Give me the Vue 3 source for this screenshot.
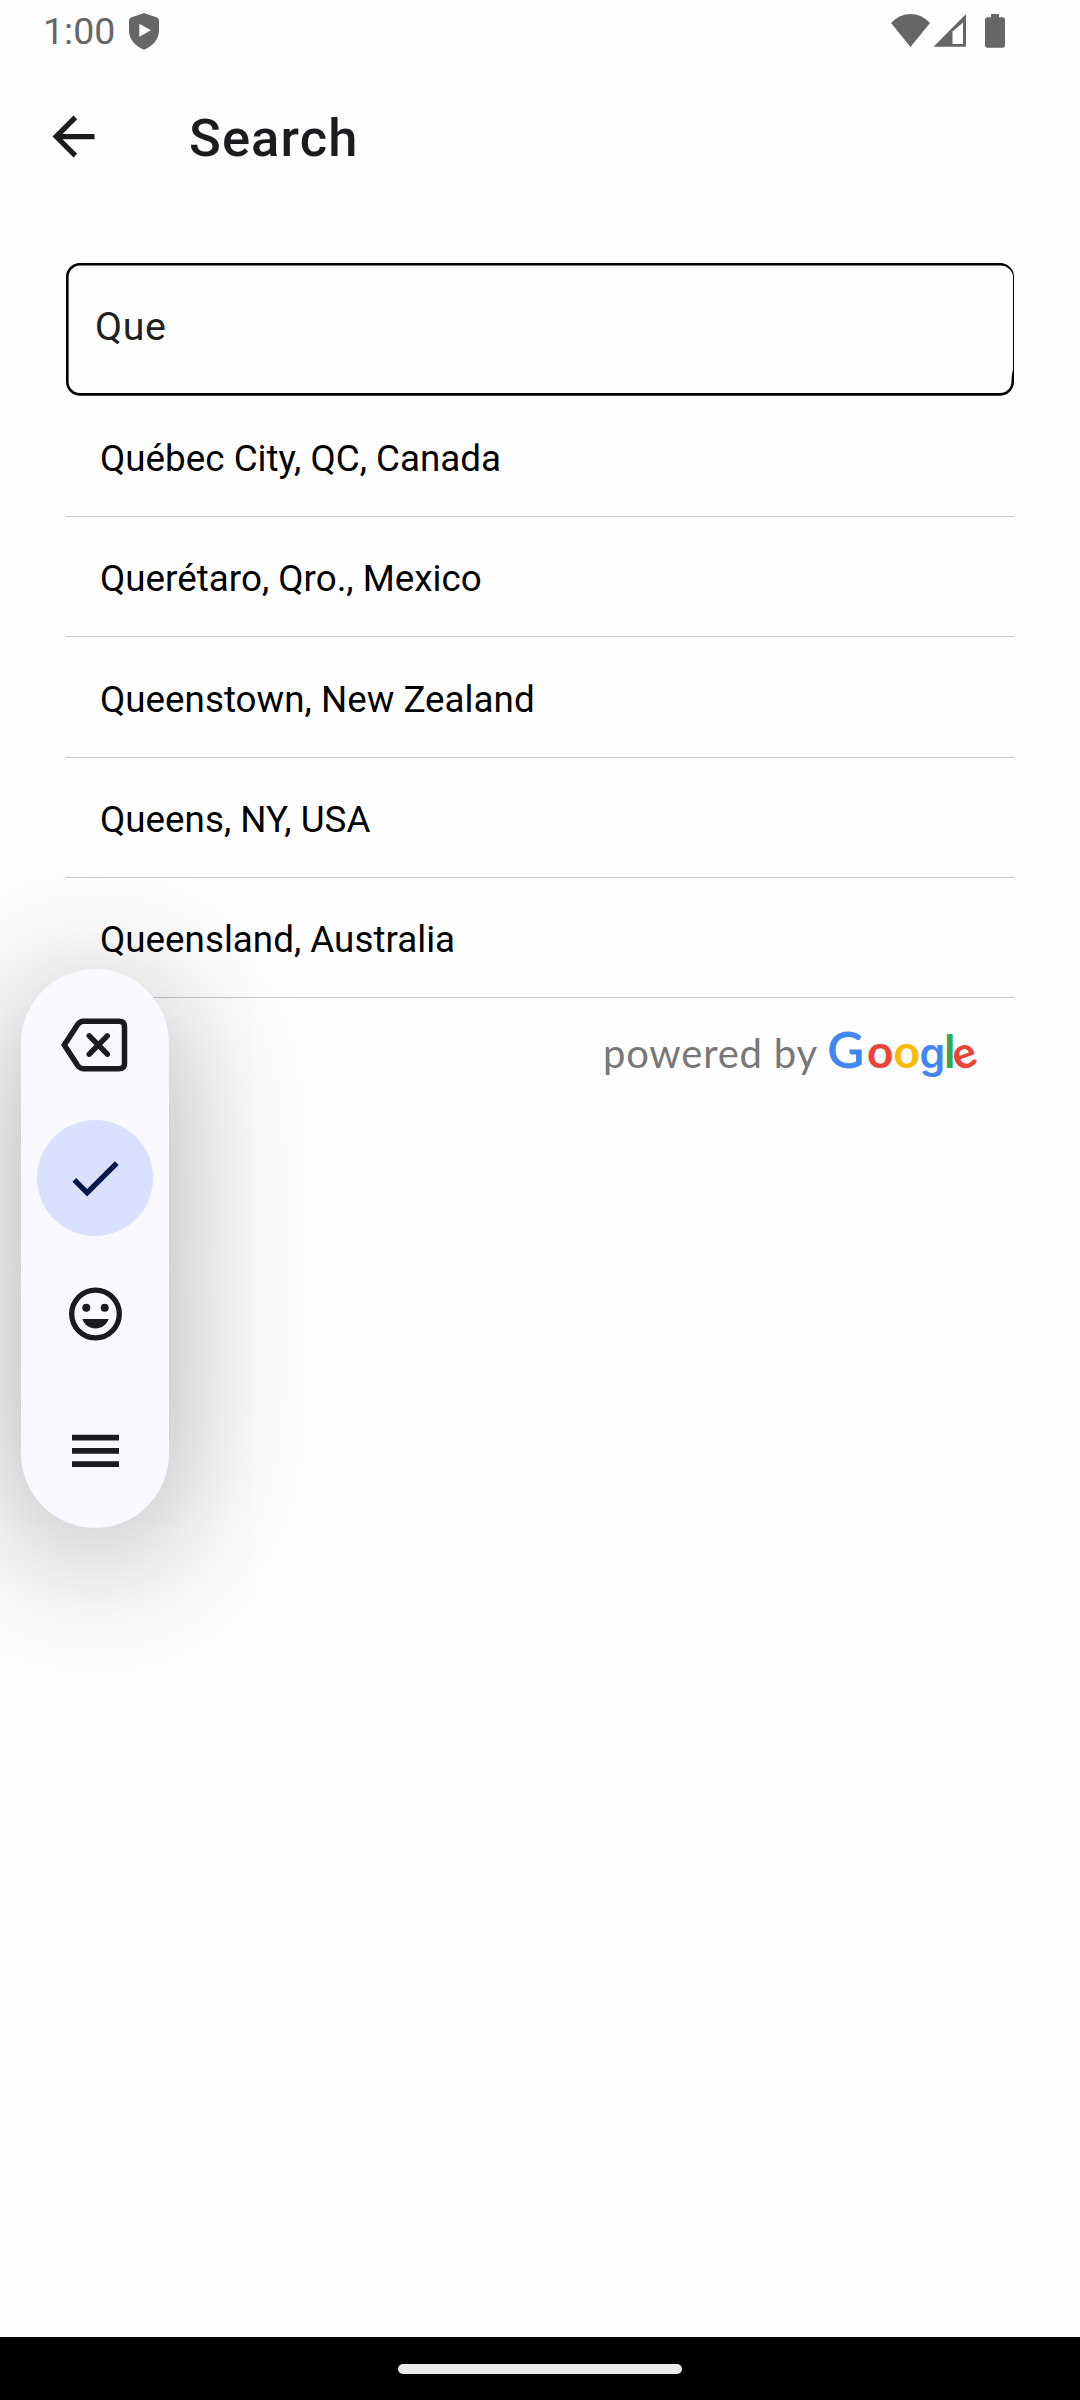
<script setup>
const results = [
  'Québec City, QC, Canada',
  'Querétaro, Qro., Mexico',
  'Queenstown, New Zealand',
  'Queens, NY, USA',
  'Queensland, Australia',
]
</script>

<template>
  <div class="screen">
    <header class="status">
      <span class="time">1:00</span>
      <svg class="shield" width="30" height="37" viewBox="0 0 30 37">
        <path fill="#666" fill-rule="evenodd" d="M15 0 L28 4.600 Q30 5.400 30 7.600 V17.500 C30 26.500 23.500 33.500 15 36.700 C6.500 33.500 0 26.500 0 17.500 V7.600 Q0 5.400 2 4.600 Z M10.300 10.800 V23.800 L22 17.300 Z" />
      </svg>
      <svg class="signals" width="115" height="36" viewBox="0 0 115 36">
        <g fill="#666">
          <path d="M0 10 Q8.500 1 19.500 1 Q30.500 1 39 10 L19.500 34 Z" />
          <path fill-rule="evenodd" d="M42.500 33.800 L75 1 V33.800 Z M61.500 18.500 V31 H72 V9.500 Z" />
          <path d="M100 1 H108 V4.300 H111.500 Q114 4.300 114 6.800 V32 Q114 34.800 111.500 34.800 H96.500 Q94 34.800 94 32 V6.800 Q94 4.300 96.500 4.300 H100 Z" />
        </g>
      </svg>
    </header>

    <div class="appbar">
      <svg class="back" width="63" height="63" viewBox="0 0 24 24">
        <path fill="#1d1b20" d="M20 11H7.830l5.590-5.590L12 4l-8 8 8 8 1.410-1.410L7.830 13H20v-2z" />
      </svg>
      <h1>Search</h1>
    </div>

    <main>
      <div class="field">
        <svg class="outline" width="948" height="133" viewBox="0 0 948 133">
          <path fill-rule="evenodd" d="M14 0 H934 A14 14 0 0 1 948 14 V119 A14 14 0 0 1 934 132.700 H14 A14 14 0 0 1 0 119 V14 A14 14 0 0 1 14 0 Z M14 2.600 A11.400 11.400 0 0 0 2.600 14 V119 A11.400 11.400 0 0 0 14 130.100 H934 A11.500 11.500 0 0 0 945.500 119 Q945.500 111 947 107 V14 A13 11.400 0 0 0 934 2.600 Z" />
        </svg>
        <span>Que</span>
      </div>
      <ul>
        <li v-for="r in results" :key="r">{{ r }}</li>
      </ul>
      <div class="credit">
        <svg width="395" height="80" viewBox="0 -12 395 80">
          <text class="by" x="0" y="45" textLength="214" lengthAdjust="spacing">powered by</text>
          <g class="logo">
            <text class="g-cap" x="224.500" y="45">G</text>
            <text x="264" y="45" fill="#ea4335">o</text>
            <text x="290.500" y="45" fill="#fbbc05">o</text>
            <text class="g-low" x="316.500" y="45">g</text>
            <text x="341" y="45" fill="#34a853">l</text>
            <text class="tilt" x="350" y="45" fill="#ea4335" transform="rotate(-20 362 34)">e</text>
          </g>
        </svg>
      </div>
    </main>

    <aside class="tools">
      <div class="tool">
        <svg width="68" height="54" viewBox="0 0 68 54">
          <g fill="none" stroke="#1b1b1f" stroke-width="5.500" stroke-linejoin="round" stroke-linecap="round">
            <path stroke-linejoin="miter" d="M3.300 27 L16.300 7 Q19 3.300 22 3.300 H58 Q63.500 3.300 63.500 8.500 V45.500 Q63.500 50.700 58 50.700 H22 Q19 50.700 16.300 47 Z" />
            <path d="M28.300 17.800 L46.300 36.200 M46.300 17.800 L28.300 36.200" />
          </g>
        </svg>
      </div>
      <div class="tool ok">
        <svg width="63" height="63" viewBox="0 0 24 24">
          <path fill="#001849" d="M9 16.170L4.830 12l-1.420 1.410L9 19 21 7l-1.410-1.410z" />
        </svg>
      </div>
      <div class="tool face">
        <svg width="54" height="54" viewBox="0 0 54 54">
          <g transform="translate(.5 0)">
            <circle cx="27" cy="27" r="23.800" fill="none" stroke="#1b1b1f" stroke-width="5.300" />
            <g fill="#1b1b1f">
              <circle cx="17.800" cy="20.800" r="4" />
              <circle cx="36.200" cy="20.800" r="4" />
              <path d="M13.800 32 H40.200 C38 38 33 41.500 27 41.500 C21 41.500 16 38 13.800 32 Z" />
            </g>
          </g>
        </svg>
      </div>
      <div class="tool">
        <svg width="48" height="34" viewBox="0 0 48 34">
          <path fill="#1b1b1f" d="M1 .8 H48 V6.600 H1 Z M1 14 H48 V19.800 H1 Z M1 27.200 H48 V33 H1 Z" />
        </svg>
      </div>
    </aside>

    <footer class="nav"><div class="handle"></div></footer>
  </div>
</template>

<style>
body {
  margin: 0;
  background: #fefefe;
}
</style>

<style scoped>
.screen {
  position: relative;
  width: 1080px;
  height: 2400px;
  overflow: hidden;
  display: flex;
  flex-direction: column;
  background: #fefefe;
  font-family: Roboto, "Liberation Sans", sans-serif;
}
svg {
  display: block;
  flex: none;
}
.status {
  display: flex;
  align-items: flex-start;
  height: 74px;
  padding-left: 43px;
}
.time {
  width: 86px;
  padding-top: 9px;
  font-size: 37.500px;
  line-height: 44px;
  color: #666;
}
.shield {
  margin-top: 13px;
}
.signals {
  margin: 13px 74px 0 auto;
}
.appbar {
  display: flex;
  align-items: center;
  height: 125px;
  padding-left: 42px;
}
h1 {
  margin: 3px 0 0 84px;
  font-size: 52.500px;
  line-height: 62px;
  font-weight: 500;
  letter-spacing: 1.100px;
  color: #1d1b20;
}
main {
  flex: 1;
  padding: 64px 66px 0;
}
.field {
  position: relative;
  box-sizing: border-box;
  height: 133.600px;
  padding: 41px 0 0 29px;
}
.field span {
  display: block;
  font-size: 39.400px;
  line-height: 46px;
  letter-spacing: 0.6px;
  color: #212121;
}
.outline {
  position: absolute;
  left: 0;
  top: 0;
}
ul {
  margin: 0;
  padding: 0;
  list-style: none;
}
li {
  box-sizing: border-box;
  height: 120.350px;
  padding: 40.400px 0 0 34px;
  border-bottom: 1px solid #c8c7cc;
  font-size: 36.750px;
  line-height: 43px;
  letter-spacing: 0.02px;
  color: #000;
}
.credit {
  display: flex;
  justify-content: flex-end;
  padding: 13px 16px 0 0;
}
.by {
  font: 40px Lato, sans-serif;
  fill: #777;
}
.logo text {
  font: 700 46px Lato, sans-serif;
}
.logo .g-cap {
  font: 500 50px Lato, sans-serif;
  fill: #4285f4;
  stroke: #4285f4;
  stroke-width: 0.8px;
}
.logo .g-low {
  font: 600 41px Inter, sans-serif;
  fill: #4285f4;
}
.logo .tilt {
  font-size: 44px;
}
.tools {
  position: absolute;
  left: 21px;
  top: 969px;
  box-sizing: border-box;
  width: 148px;
  height: 559px;
  padding: 8px 0 0 0;
  border-radius: 74px;
  background: #f9f8ff;
  box-shadow: 0 24px 140px 4px rgba(0, 0, 0, 0.32);
}
.tool {
  display: flex;
  align-items: center;
  justify-content: center;
  height: 135.500px;
}
.ok svg {
  margin-bottom: 5px;
  padding: 26.500px;
  border-radius: 50%;
  background: #dae1ff;
}
.face svg {
  margin-bottom: 3px;
}
.nav {
  display: flex;
  justify-content: center;
  align-items: flex-start;
  height: 63px;
  background: #000;
}
.handle {
  width: 284px;
  height: 10px;
  margin-top: 27px;
  border-radius: 5px;
  background: #ebebeb;
}
</style>
